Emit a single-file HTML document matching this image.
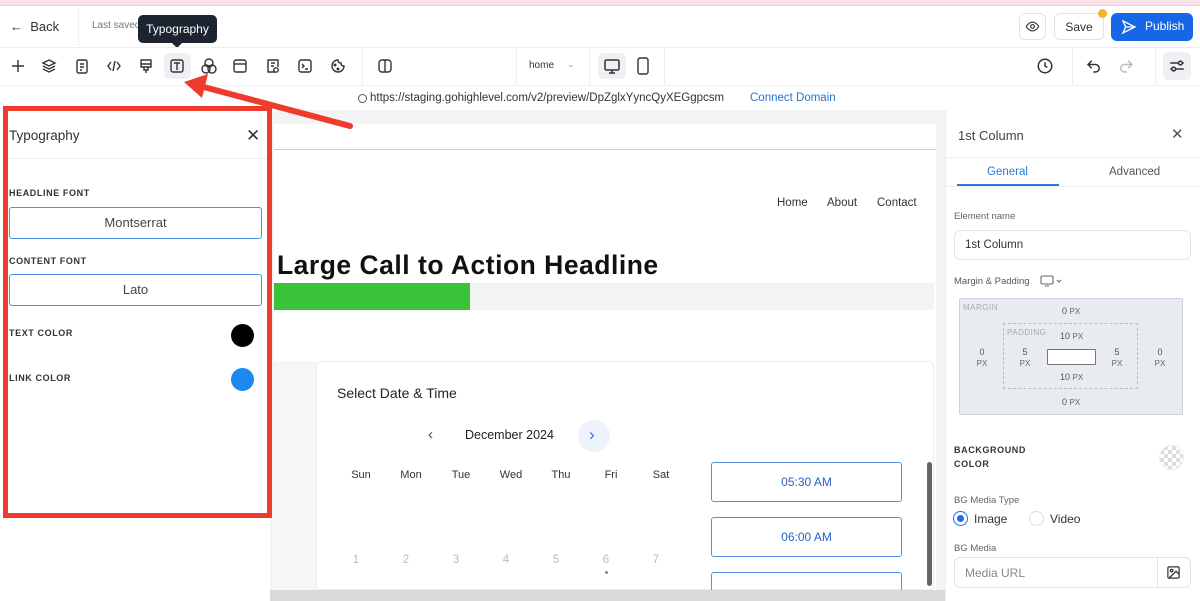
<!DOCTYPE html>
<html><head><meta charset="utf-8"><style>
*{box-sizing:border-box;margin:0;padding:0}
body{width:1200px;height:601px;position:relative;overflow:hidden;background:#fff;font-family:"Liberation Sans",sans-serif;color:#222}
.a{position:absolute}
.lbl{font-size:9px;font-weight:bold;letter-spacing:.6px;color:#333}
.px{font-size:8px;color:#666}
</style></head><body>
<div class="a" style="left:0;top:0;width:1200px;height:6px;background:#fbe3e7;border-bottom:1px solid #f3cfd6"></div>
<div class="a" style="left:10px;top:19px;font-size:13px;color:#333">&#8592;&nbsp; Back</div>
<div class="a" style="left:78px;top:8px;width:1px;height:38px;background:#eee"></div>
<div class="a" style="left:92px;top:20px;font-size:10px;color:#777">Last saved</div>
<div class="a" style="left:138px;top:15px;width:79px;height:28px;background:#1c2430;border-radius:5px;color:#fff;font-size:12px;text-align:center;line-height:28px">Typography</div>
<div class="a" style="left:172px;top:43px;border-left:5px solid transparent;border-right:5px solid transparent;border-top:5px solid #1c2430"></div>
<div class="a" style="left:1019px;top:13px;width:27px;height:27px;border:1px solid #e3e3e3;border-radius:6px"></div>
<svg class="a" style="left:1025px;top:19px" width="15" height="15" viewBox="0 0 24 24" fill="none" stroke="#444" stroke-width="2"><path d="M2 12s4-7 10-7 10 7 10 7-4 7-10 7S2 12 2 12z"/><circle cx="12" cy="12" r="3"/></svg>
<div class="a" style="left:1054px;top:13px;width:50px;height:27px;border:1px solid #e3e3e3;border-radius:6px;font-size:12px;text-align:center;line-height:26px;color:#333">Save</div>
<div class="a" style="left:1098px;top:9px;width:9px;height:9px;border-radius:50%;background:#f6b425"></div>
<div class="a" style="left:1111px;top:13px;width:82px;height:28px;background:#1766e6;border-radius:6px;color:#fff;font-size:12px;line-height:27px;padding-left:34px">Publish</div>
<svg class="a" style="left:1121px;top:19px" width="16" height="16" viewBox="0 0 24 24" fill="none" stroke="#fff" stroke-width="2"><path d="M3 3l18 9-18 9 4-9z M7 12h14"/></svg>
<div class="a" style="left:0;top:47px;width:1200px;height:1px;background:#eee"></div>
<div class="a" style="left:164px;top:53px;width:27px;height:26px;background:#eef0f3;border-radius:5px"></div>
<svg class="a" style="left:0;top:56px" width="360" height="20" viewBox="0 0 360 20" fill="none" stroke="#333" stroke-width="1.4">
<path d="M18 4v12M12 10h12"/>
<path d="M43 7l6-3 6 3-6 3z M43 10l6 3 6-3 M43 13l6 3 6-3"/>
<rect x="77" y="4" width="10" height="13" rx="1.5"/><path d="M80 8h4M80 11h4M80 14h2"/>
<path d="M111 6l-3 4 3 4M117 6l3 4-3 4M115 5l-2 10"/>
<path d="M141 4h10v7h-10zM141 8h10M144 11v3h4v-3M146 14v3"/>
<rect x="171" y="4" width="12" height="12" rx="2"/><path d="M174 7h6M177 7v7"/>
<circle cx="209" cy="7" r="4"/><circle cx="206" cy="13" r="4"/><circle cx="212" cy="13" r="4"/>
<rect x="234" y="4" width="12" height="12" rx="2"/><path d="M234 8h12"/>
<path d="M275 16h-7v-12h10v7"/><circle cx="276" cy="14" r="2.2"/><path d="M271 7h4M271 10h3"/>
<rect x="299" y="4" width="12" height="12" rx="2"/><path d="M302 8l2 2-2 2M305 13h3"/>
<path d="M338 4a6 6 0 1 0 6 6c-2 0-3-1-3-3-2 0-3-1-3-3z"/><circle cx="335" cy="9" r=".8"/><circle cx="338" cy="13" r=".8"/>
</svg>
<div class="a" style="left:362px;top:48px;width:1px;height:37px;background:#eee"></div>
<svg class="a" style="left:377px;top:58px" width="16" height="16" viewBox="0 0 16 16" fill="none" stroke="#333" stroke-width="1.4"><rect x="2" y="2" width="12" height="12" rx="3"/><path d="M8 2v12"/></svg>
<div class="a" style="left:516px;top:48px;width:1px;height:37px;background:#eee"></div>
<div class="a" style="left:529px;top:60px;font-size:10px;color:#333">home</div>
<div class="a" style="left:567px;top:59px;font-size:9px;color:#999">&#8964;</div>
<div class="a" style="left:589px;top:48px;width:1px;height:37px;background:#eee"></div>
<div class="a" style="left:598px;top:53px;width:28px;height:26px;background:#eef0f3;border-radius:5px"></div>
<svg class="a" style="left:603px;top:57px" width="18" height="18" viewBox="0 0 18 18" fill="none" stroke="#333" stroke-width="1.5"><rect x="2" y="3" width="14" height="10" rx="1.5"/><path d="M9 13v3M6 16h6"/></svg>
<svg class="a" style="left:636px;top:57px" width="14" height="18" viewBox="0 0 14 18" fill="none" stroke="#333" stroke-width="1.4"><rect x="2" y="1" width="10" height="16" rx="2"/><path d="M7 14h.1"/></svg>
<div class="a" style="left:664px;top:48px;width:1px;height:37px;background:#eee"></div>
<svg class="a" style="left:1036px;top:57px" width="18" height="18" viewBox="0 0 24 24" fill="none" stroke="#333" stroke-width="2"><circle cx="12" cy="12" r="9"/><path d="M12 7v5l3 2"/></svg>
<div class="a" style="left:1072px;top:48px;width:1px;height:37px;background:#eee"></div>
<svg class="a" style="left:1085px;top:57px" width="18" height="18" viewBox="0 0 24 24" fill="none" stroke="#333" stroke-width="2"><path d="M9 5L4 10l5 5M4 10h10a5 5 0 0 1 0 10h-3"/></svg>
<svg class="a" style="left:1117px;top:57px" width="18" height="18" viewBox="0 0 24 24" fill="none" stroke="#bbb" stroke-width="2"><path d="M15 5l5 5-5 5M20 10H10a5 5 0 0 0 0 10h3"/></svg>
<div class="a" style="left:1155px;top:48px;width:1px;height:37px;background:#eee"></div>
<div class="a" style="left:1163px;top:52px;width:28px;height:28px;background:#eef0f3;border-radius:6px"></div>
<svg class="a" style="left:1168px;top:57px" width="18" height="18" viewBox="0 0 24 24" fill="none" stroke="#333" stroke-width="2"><path d="M3 8h11M19 8h2M3 16h2M10 16h11"/><circle cx="16.5" cy="8" r="2.5"/><circle cx="7.5" cy="16" r="2.5"/></svg>
<div class="a" style="left:0;top:85px;width:1200px;height:1px;background:#f2f2f2"></div>
<div class="a" style="left:358px;top:94px;width:9px;height:9px;border:1px solid #555;border-radius:50%"></div>
<div class="a" style="left:370px;top:92px;font-size:11.5px;color:#333">https://staging.gohighlevel.com/v2/preview/DpZglxYyncQyXEGgpcsm</div>
<div class="a" style="left:750px;top:92px;font-size:11.5px;color:#2a6fd6">Connect Domain</div>
<div class="a" style="left:270px;top:110px;width:676px;height:491px;background:#f3f4f6"></div>
<div class="a" style="left:274px;top:124px;width:662px;height:466px;background:#fff"></div>
<div class="a" style="left:274px;top:149px;width:662px;height:1px;background:#cfc6f3"></div>
<div class="a" style="left:777px;top:197px;font-size:11.5px;color:#333">Home</div>
<div class="a" style="left:827px;top:197px;font-size:11.5px;color:#333">About</div>
<div class="a" style="left:877px;top:197px;font-size:11.5px;color:#333">Contact</div>
<div class="a" style="left:277px;top:250px;font-size:26.5px;font-weight:bold;color:#111;letter-spacing:.5px">Large Call to Action Headline</div>
<div class="a" style="left:274px;top:283px;width:660px;height:27px;background:#f3f3f3"></div>
<div class="a" style="left:274px;top:283px;width:196px;height:27px;background:#3ac23a"></div>
<div class="a" style="left:274px;top:361px;width:42px;height:229px;background:#f6f6f7"></div>
<div class="a" style="left:316px;top:361px;width:618px;height:229px;border:1px solid #ececec;border-radius:6px 6px 0 0;background:#fff"></div>
<div class="a" style="left:337px;top:385px;font-size:14px;color:#222">Select Date &amp; Time</div>
<div class="a" style="left:428px;top:426px;font-size:15px;color:#444">&#8249;</div>
<div class="a" style="left:465px;top:428px;font-size:12.5px;color:#222">December 2024</div>
<div class="a" style="left:578px;top:420px;width:32px;height:32px;border-radius:50%;background:#edf2fc"></div>
<div class="a" style="left:589px;top:425px;font-size:17px;color:#2a6fd6">&#8250;</div>
<div class="a" style="left:336px;top:469px;width:350px;font-size:11px;color:#333;display:flex"><span style="width:50px;text-align:center">Sun</span><span style="width:50px;text-align:center">Mon</span><span style="width:50px;text-align:center">Tue</span><span style="width:50px;text-align:center">Wed</span><span style="width:50px;text-align:center">Thu</span><span style="width:50px;text-align:center">Fri</span><span style="width:50px;text-align:center">Sat</span></div>
<div class="a" style="left:331px;top:554px;width:350px;font-size:11.5px;color:#bbb;display:flex"><span style="width:50px;text-align:center">1</span><span style="width:50px;text-align:center">2</span><span style="width:50px;text-align:center">3</span><span style="width:50px;text-align:center">4</span><span style="width:50px;text-align:center">5</span><span style="width:50px;text-align:center">6</span><span style="width:50px;text-align:center">7</span></div>
<div class="a" style="left:605px;top:571px;width:3px;height:3px;border-radius:50%;background:#5b8de0"></div>
<div class="a" style="left:711px;top:462px;width:191px;height:40px;border:1px solid #5b8de0;border-radius:3px;text-align:center;line-height:38px;font-size:12px;color:#2a5fc9">05:30 AM</div>
<div class="a" style="left:711px;top:517px;width:191px;height:40px;border:1px solid #5b8de0;border-radius:3px;text-align:center;line-height:38px;font-size:12px;color:#2a5fc9">06:00 AM</div>
<div class="a" style="left:711px;top:572px;width:191px;height:18px;border:1px solid #5b8de0;border-bottom:none;border-radius:3px 3px 0 0"></div>
<div class="a" style="left:927px;top:462px;width:5px;height:124px;background:#666;border-radius:3px"></div>
<div class="a" style="left:270px;top:590px;width:676px;height:11px;background:#d9d9d9"></div>
<div class="a" style="left:0;top:105px;width:270px;height:496px;background:#fff"></div>
<div class="a" style="left:9px;top:128px;font-size:13.5px;color:#333">Typography</div>
<div class="a" style="left:246px;top:126px;font-size:17px;color:#333">&#10005;</div>
<div class="a" style="left:8px;top:158px;width:260px;height:1px;background:#eee"></div>
<div class="a lbl" style="left:9px;top:188px">HEADLINE FONT</div>
<div class="a" style="left:9px;top:207px;width:253px;height:32px;border:1.5px solid #4f8fe6;border-radius:3px;text-align:center;line-height:29px;font-size:13px;color:#444">Montserrat</div>
<div class="a lbl" style="left:9px;top:256px">CONTENT FONT</div>
<div class="a" style="left:9px;top:274px;width:253px;height:32px;border:1.5px solid #4f8fe6;border-radius:3px;text-align:center;line-height:29px;font-size:13px;color:#444">Lato</div>
<div class="a lbl" style="left:9px;top:328px">TEXT COLOR</div>
<div class="a" style="left:231px;top:324px;width:23px;height:23px;border-radius:50%;background:#000"></div>
<div class="a lbl" style="left:9px;top:373px">LINK COLOR</div>
<div class="a" style="left:231px;top:368px;width:23px;height:23px;border-radius:50%;background:#1e88f0"></div>
<div class="a" style="left:3px;top:106px;width:269px;height:412px;border:5px solid #ef3b2e"></div>
<svg class="a" style="left:0;top:0" width="400" height="140" viewBox="0 0 400 140"><path d="M350 126L200 86" stroke="#ef3b2e" stroke-width="6" stroke-linecap="round"/><path d="M184 82L208 74L202 98z" fill="#ef3b2e"/></svg>
<div class="a" style="left:945px;top:110px;width:255px;height:491px;background:#fff;border-left:1px solid #eee"></div>
<div class="a" style="left:958px;top:128px;font-size:13px;color:#444">1st Column</div>
<div class="a" style="left:1171px;top:125px;font-size:15px;color:#555">&#10005;</div>
<div class="a" style="left:946px;top:157px;width:254px;height:1px;background:#eee"></div>
<div class="a" style="left:987px;top:166px;font-size:11.5px;color:#2a7ad6">General</div>
<div class="a" style="left:1109px;top:166px;font-size:11.5px;color:#555">Advanced</div>
<div class="a" style="left:946px;top:186px;width:254px;height:1px;background:#eee"></div>
<div class="a" style="left:957px;top:184px;width:102px;height:2px;background:#2a7ad6"></div>
<div class="a" style="left:954px;top:211px;font-size:9.5px;color:#666">Element name</div>
<div class="a" style="left:954px;top:230px;width:237px;height:30px;border:1px solid #e3e3e3;border-radius:6px;font-size:11.5px;line-height:29px;padding-left:10px;color:#333">1st Column</div>
<div class="a" style="left:954px;top:276px;font-size:9.5px;color:#555">Margin &amp; Padding</div>
<svg class="a" style="left:1040px;top:275px" width="24" height="12" viewBox="0 0 24 12" fill="none" stroke="#666" stroke-width="1.1"><rect x="1" y="1" width="12" height="8" rx="1.5"/><path d="M5 11h4M17 5l2 2 2-2"/></svg>
<div class="a" style="left:959px;top:298px;width:224px;height:117px;background:#e8ebef;border:1px solid #cdd2d8;border-radius:2px"></div>
<div class="a px" style="left:963px;top:303px;color:#aaa;letter-spacing:.5px">MARGIN</div>
<div class="a" style="left:1062px;top:306px;font-size:9px;color:#555">0 <span class="px">PX</span></div>
<div class="a" style="left:1062px;top:397px;font-size:9px;color:#555">0 <span class="px">PX</span></div>
<div class="a" style="left:1003px;top:323px;width:135px;height:66px;border:1px dashed #b8bec6"></div>
<div class="a px" style="left:1007px;top:328px;color:#aaa;letter-spacing:.5px">PADDING</div>
<div class="a" style="left:1060px;top:331px;font-size:9px;color:#555">10 <span class="px">PX</span></div>
<div class="a" style="left:1060px;top:372px;font-size:9px;color:#555">10 <span class="px">PX</span></div>
<div class="a" style="left:1047px;top:349px;width:49px;height:16px;border:1px solid #777;background:#fff;border-radius:1px"></div>
<div class="a" style="left:975px;top:347px;font-size:9px;color:#555;text-align:center;width:14px;line-height:11px">0<br><span class="px">PX</span></div>
<div class="a" style="left:1018px;top:347px;font-size:9px;color:#555;text-align:center;width:14px;line-height:11px">5<br><span class="px">PX</span></div>
<div class="a" style="left:1110px;top:347px;font-size:9px;color:#555;text-align:center;width:14px;line-height:11px">5<br><span class="px">PX</span></div>
<div class="a" style="left:1153px;top:347px;font-size:9px;color:#555;text-align:center;width:14px;line-height:11px">0<br><span class="px">PX</span></div>
<div class="a lbl" style="left:954px;top:443px;line-height:14px">BACKGROUND<br>COLOR</div>
<div class="a" style="left:1159px;top:445px;width:25px;height:25px;border-radius:50%;background:repeating-conic-gradient(#ddd 0 25%,#fff 0 50%) 0 0/8px 8px;border:1px solid #eee"></div>
<div class="a" style="left:954px;top:495px;font-size:9.5px;color:#666">BG Media Type</div>
<div class="a" style="left:953px;top:511px;width:15px;height:15px;border-radius:50%;border:1.5px solid #1e6ee6"></div>
<div class="a" style="left:957px;top:515px;width:7px;height:7px;border-radius:50%;background:#1e6ee6"></div>
<div class="a" style="left:974px;top:512px;font-size:12px;color:#333">Image</div>
<div class="a" style="left:1029px;top:511px;width:15px;height:15px;border-radius:50%;border:1px solid #ddd"></div>
<div class="a" style="left:1050px;top:512px;font-size:12px;color:#333">Video</div>
<div class="a" style="left:954px;top:543px;font-size:9.5px;color:#666">BG Media</div>
<div class="a" style="left:954px;top:557px;width:237px;height:31px;border:1px solid #e3e3e3;border-radius:6px;font-size:12px;line-height:30px;padding-left:10px;color:#888">Media URL</div>
<div class="a" style="left:1157px;top:557px;width:1px;height:31px;background:#e3e3e3"></div>
<svg class="a" style="left:1166px;top:565px" width="15" height="15" viewBox="0 0 24 24" fill="none" stroke="#333" stroke-width="2"><rect x="3" y="3" width="18" height="18" rx="2"/><circle cx="9" cy="9" r="2"/><path d="M21 15l-5-5L5 21"/></svg>
</body></html>
